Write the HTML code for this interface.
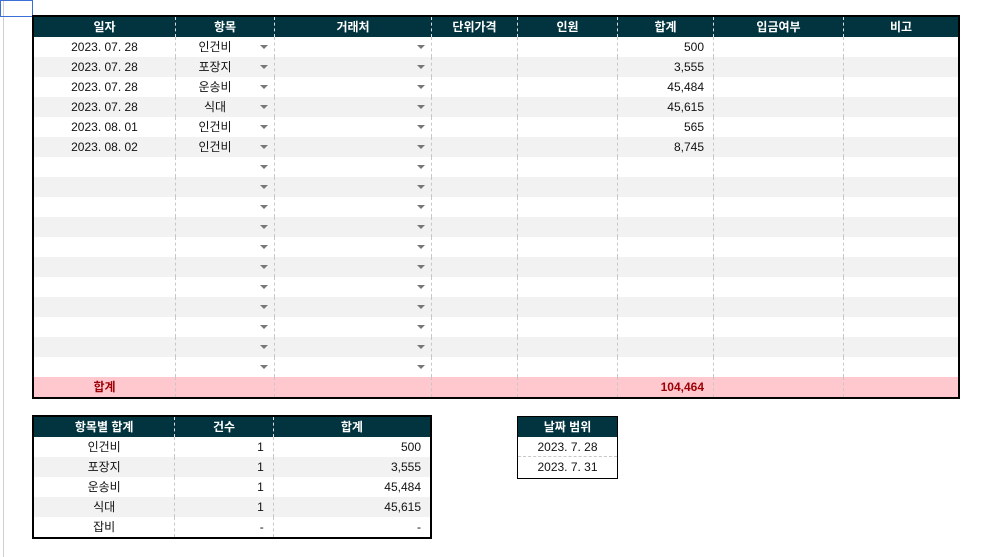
<!DOCTYPE html>
<html><head><meta charset="utf-8"><style>
*{box-sizing:border-box;margin:0;padding:0}
body{width:988px;height:557px;background:#fff;position:relative;overflow:hidden;font-family:"Liberation Sans","Malgun Gothic","Noto Sans CJK KR",sans-serif;font-size:12px;color:#111}
.box{position:absolute;border:2px solid #000;background:#fff}
.r{display:flex;height:20px;line-height:20px}
.r.g{background:#f2f2f2}
.r.h{background:#02343f;color:#fff;font-weight:bold}
.r.t{background:#ffc7ce;color:#9c0006;font-weight:bold}
.c{border-right:1px dashed #c8c8c8;position:relative;text-align:center;overflow:hidden;white-space:nowrap}
.h .c{border-right:1px dashed #ddd}
.c:last-child{border-right:none}
.rt{text-align:right;padding-right:9px}
.dd{padding-right:20px}
.dd::after{content:"";position:absolute;right:6px;top:8px;border-left:4px solid transparent;border-right:4px solid transparent;border-top:4px solid #777}
.w1{width:142px}.w2{width:99px}.w3{width:157px}.w4{width:86px}.w5{width:100px}.w6{width:96px}.w7{width:130px}.w8{width:114px}
.gl{position:absolute;left:3px;top:0;width:1px;height:557px;background:#d0d0d0}
</style></head><body>
<div class="gl"></div>
<div style="position:absolute;left:0;top:0;width:33px;height:17px;border:1px solid #3a6fd8"></div>

<div class="box" style="left:32px;top:15px;width:928px;height:384px">
<div class="r h"><div class="c w1">일자</div><div class="c w2">항목</div><div class="c w3">거래처</div><div class="c w4">단위가격</div><div class="c w5">인원</div><div class="c w6">합계</div><div class="c w7">입금여부</div><div class="c w8">비고</div></div>
<div class="r"><div class="c w1">2023. 07. 28</div><div class="c w2 dd">인건비</div><div class="c w3 dd"></div><div class="c w4"></div><div class="c w5"></div><div class="c w6 rt">500</div><div class="c w7"></div><div class="c w8"></div></div>
<div class="r g"><div class="c w1">2023. 07. 28</div><div class="c w2 dd">포장지</div><div class="c w3 dd"></div><div class="c w4"></div><div class="c w5"></div><div class="c w6 rt">3,555</div><div class="c w7"></div><div class="c w8"></div></div>
<div class="r"><div class="c w1">2023. 07. 28</div><div class="c w2 dd">운송비</div><div class="c w3 dd"></div><div class="c w4"></div><div class="c w5"></div><div class="c w6 rt">45,484</div><div class="c w7"></div><div class="c w8"></div></div>
<div class="r g"><div class="c w1">2023. 07. 28</div><div class="c w2 dd">식대</div><div class="c w3 dd"></div><div class="c w4"></div><div class="c w5"></div><div class="c w6 rt">45,615</div><div class="c w7"></div><div class="c w8"></div></div>
<div class="r"><div class="c w1">2023. 08. 01</div><div class="c w2 dd">인건비</div><div class="c w3 dd"></div><div class="c w4"></div><div class="c w5"></div><div class="c w6 rt">565</div><div class="c w7"></div><div class="c w8"></div></div>
<div class="r g"><div class="c w1">2023. 08. 02</div><div class="c w2 dd">인건비</div><div class="c w3 dd"></div><div class="c w4"></div><div class="c w5"></div><div class="c w6 rt">8,745</div><div class="c w7"></div><div class="c w8"></div></div>
<div class="r"><div class="c w1"></div><div class="c w2 dd"></div><div class="c w3 dd"></div><div class="c w4"></div><div class="c w5"></div><div class="c w6"></div><div class="c w7"></div><div class="c w8"></div></div>
<div class="r g"><div class="c w1"></div><div class="c w2 dd"></div><div class="c w3 dd"></div><div class="c w4"></div><div class="c w5"></div><div class="c w6"></div><div class="c w7"></div><div class="c w8"></div></div>
<div class="r"><div class="c w1"></div><div class="c w2 dd"></div><div class="c w3 dd"></div><div class="c w4"></div><div class="c w5"></div><div class="c w6"></div><div class="c w7"></div><div class="c w8"></div></div>
<div class="r g"><div class="c w1"></div><div class="c w2 dd"></div><div class="c w3 dd"></div><div class="c w4"></div><div class="c w5"></div><div class="c w6"></div><div class="c w7"></div><div class="c w8"></div></div>
<div class="r"><div class="c w1"></div><div class="c w2 dd"></div><div class="c w3 dd"></div><div class="c w4"></div><div class="c w5"></div><div class="c w6"></div><div class="c w7"></div><div class="c w8"></div></div>
<div class="r g"><div class="c w1"></div><div class="c w2 dd"></div><div class="c w3 dd"></div><div class="c w4"></div><div class="c w5"></div><div class="c w6"></div><div class="c w7"></div><div class="c w8"></div></div>
<div class="r"><div class="c w1"></div><div class="c w2 dd"></div><div class="c w3 dd"></div><div class="c w4"></div><div class="c w5"></div><div class="c w6"></div><div class="c w7"></div><div class="c w8"></div></div>
<div class="r g"><div class="c w1"></div><div class="c w2 dd"></div><div class="c w3 dd"></div><div class="c w4"></div><div class="c w5"></div><div class="c w6"></div><div class="c w7"></div><div class="c w8"></div></div>
<div class="r"><div class="c w1"></div><div class="c w2 dd"></div><div class="c w3 dd"></div><div class="c w4"></div><div class="c w5"></div><div class="c w6"></div><div class="c w7"></div><div class="c w8"></div></div>
<div class="r g"><div class="c w1"></div><div class="c w2 dd"></div><div class="c w3 dd"></div><div class="c w4"></div><div class="c w5"></div><div class="c w6"></div><div class="c w7"></div><div class="c w8"></div></div>
<div class="r"><div class="c w1"></div><div class="c w2 dd"></div><div class="c w3 dd"></div><div class="c w4"></div><div class="c w5"></div><div class="c w6"></div><div class="c w7"></div><div class="c w8"></div></div>
<div class="r t"><div class="c w1">합계</div><div class="c w2"></div><div class="c w3"></div><div class="c w4"></div><div class="c w5"></div><div class="c w6 rt">104,464</div><div class="c w7"></div><div class="c w8"></div></div>
</div>

<div class="box" style="left:32px;top:415px;width:400px;height:124px">
<div class="r h"><div class="c w1">항목별 합계</div><div class="c w2">건수</div><div class="c w3">합계</div></div>
<div class="r"><div class="c w1">인건비</div><div class="c w2 rt">1</div><div class="c w3 rt">500</div></div>
<div class="r g"><div class="c w1">포장지</div><div class="c w2 rt">1</div><div class="c w3 rt">3,555</div></div>
<div class="r"><div class="c w1">운송비</div><div class="c w2 rt">1</div><div class="c w3 rt">45,484</div></div>
<div class="r g"><div class="c w1">식대</div><div class="c w2 rt">1</div><div class="c w3 rt">45,615</div></div>
<div class="r"><div class="c w1">잡비</div><div class="c w2 rt">-</div><div class="c w3 rt">-</div></div>
</div>

<div style="position:absolute;left:517px;top:416px;width:101px;height:63px;border:1px solid #000">
<div class="r h"><div class="c" style="width:99px">날짜 범위</div></div>
<div class="r" style="border-bottom:1px dashed #c8c8c8"><div class="c" style="width:99px">2023. 7. 28</div></div>
<div class="r"><div class="c" style="width:99px">2023. 7. 31</div></div>
</div>
</body></html>
